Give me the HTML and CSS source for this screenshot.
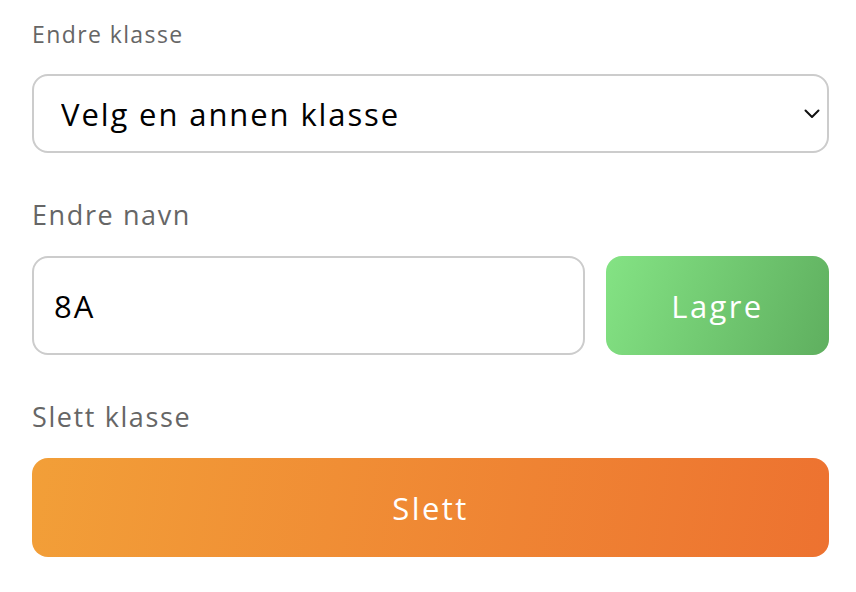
FILE: index.html
```html
<!DOCTYPE html>
<html lang="no">
<head>
<meta charset="utf-8">
<link rel="stylesheet" href="styles.css">
</head>
<body>
<div class="page">
  <div class="field field-first">
    <label class="label label-small">Endre klasse</label>
    <div class="select-wrap">
      <select class="control select">
        <option>Velg en annen klasse</option>
      </select>
      <svg class="chevron" width="16" height="10" viewBox="0 0 16 10"><path d="M1.5 1.5 L8 8 L14.5 1.5" fill="none" stroke="#111" stroke-width="2" stroke-linecap="round" stroke-linejoin="round"/></svg>
    </div>
  </div>
  <div class="field field-second">
    <label class="label">Endre navn</label>
    <div class="row">
      <input class="control input" type="text" value="8A">
      <button class="btn btn-green">Lagre</button>
    </div>
  </div>
  <div class="field">
    <label class="label">Slett klasse</label>
    <button class="btn btn-orange">Slett</button>
  </div>
</div>
</body>
</html>
```

FILE: styles.css
```css
* { box-sizing: border-box; }
html, body { margin: 0; padding: 0; background: #fff; }
body { font-family: "Open Sans", "DejaVu Sans", sans-serif; }
.page {
  width: 856px;
  padding: 19px 27px 0 32px;
  display: flex;
  flex-direction: column;
}
.field { display: flex; flex-direction: column; }
.field-first { margin-bottom: 47px; }
.field-second { margin-bottom: 47px; }
.label {
  color: #666;
  font-size: 27px;
  line-height: 30px;
  letter-spacing: 1.6px;
  margin-bottom: 26px;
}
.label-small { font-size: 23px; letter-spacing: 1.4px; margin-bottom: 25px; }
.select-wrap { position: relative; }
.control {
  font-family: inherit;
  color: #000;
  background: #fff;
  border: 2px solid #ccc;
  border-radius: 16px;
  outline: none;
  width: 100%;
  letter-spacing: 1.9px;
}
.select {
  appearance: none;
  -webkit-appearance: none;
  height: 79px;
  font-size: 31px;
  padding: 0 0 0 27px;
}
.chevron { position: absolute; right: 9px; top: 35px; }
.row { display: flex; gap: 21px; }
.input {
  flex: 1;
  height: 99px;
  font-size: 31px;
  padding: 0 0 0 20px;
}
.btn {
  border: none;
  border-radius: 16px;
  color: #fff;
  font-family: inherit;
  font-size: 31px;
  letter-spacing: 2.4px;
  height: 99px;
}
.btn-green {
  width: 223px;
  flex: none;
  background: linear-gradient(110deg, #84e384 0%, #5faf5f 100%);
}
.btn-orange {
  width: 100%;
  background: linear-gradient(100deg, #f29f38 0%, #ed7230 100%);
}
```
